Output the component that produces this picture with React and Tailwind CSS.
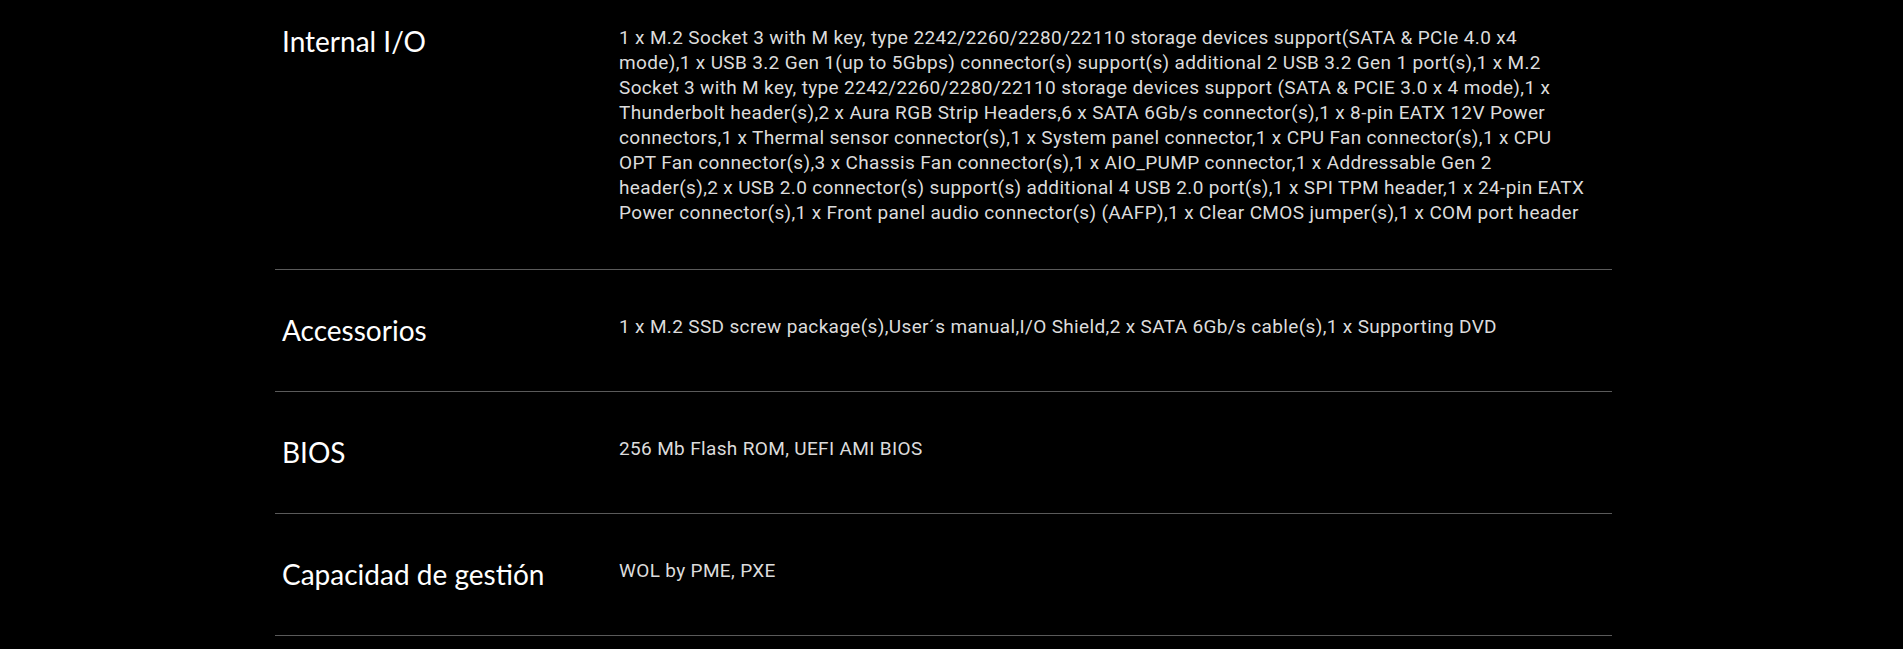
const specs = [
    {
        label: "Internal I/O",
        value:
            "1 x M.2 Socket 3 with M key, type 2242/2260/2280/22110 storage devices support(SATA & PCIe 4.0 x4 mode),1 x USB 3.2 Gen 1(up to 5Gbps) connector(s) support(s) additional 2 USB 3.2 Gen 1 port(s),1 x M.2 Socket 3 with M key, type 2242/2260/2280/22110 storage devices support (SATA & PCIE 3.0 x 4 mode),1 x Thunderbolt header(s),2 x Aura RGB Strip Headers,6 x SATA 6Gb/s connector(s),1 x 8-pin EATX 12V Power connectors,1 x Thermal sensor connector(s),1 x System panel connector,1 x CPU Fan connector(s),1 x CPU OPT Fan connector(s),3 x Chassis Fan connector(s),1 x AIO_PUMP connector,1 x Addressable Gen 2 header(s),2 x USB 2.0 connector(s) support(s) additional 4 USB 2.0 port(s),1 x SPI TPM header,1 x 24-pin EATX Power connector(s),1 x Front panel audio connector(s) (AAFP),1 x Clear CMOS jumper(s),1 x COM port header",
    },
    {
        label: "Accessorios",
        value: "1 x M.2 SSD screw package(s),User´s manual,I/O Shield,2 x SATA 6Gb/s cable(s),1 x Supporting DVD",
    },
    { label: "BIOS", value: "256 Mb Flash ROM, UEFI AMI BIOS" },
    { label: "Capacidad de gestión", value: "WOL by PME, PXE" },
];

export default function App() {
    return (
        <div className="min-h-screen bg-black overflow-hidden">
            <div className="ml-[275px] w-[1337px] -mt-[19px]">
                {specs.map((row) => (
                    <div
                        key={row.label}
                        className="flex items-start py-11 border-b border-[#5a5a5a]"
                    >
                        <div className="w-[344px] shrink-0 pl-[7px] text-white text-[28px] leading-[33px] font-['Lato',sans-serif]">
                            {row.label}
                        </div>
                        <div className="w-[969px] text-[#dcdcdc] text-[19px] leading-[25px] tracking-[0.35px] font-['Roboto',sans-serif]">
                            {row.value}
                        </div>
                    </div>
                ))}
            </div>
        </div>
    );
}
